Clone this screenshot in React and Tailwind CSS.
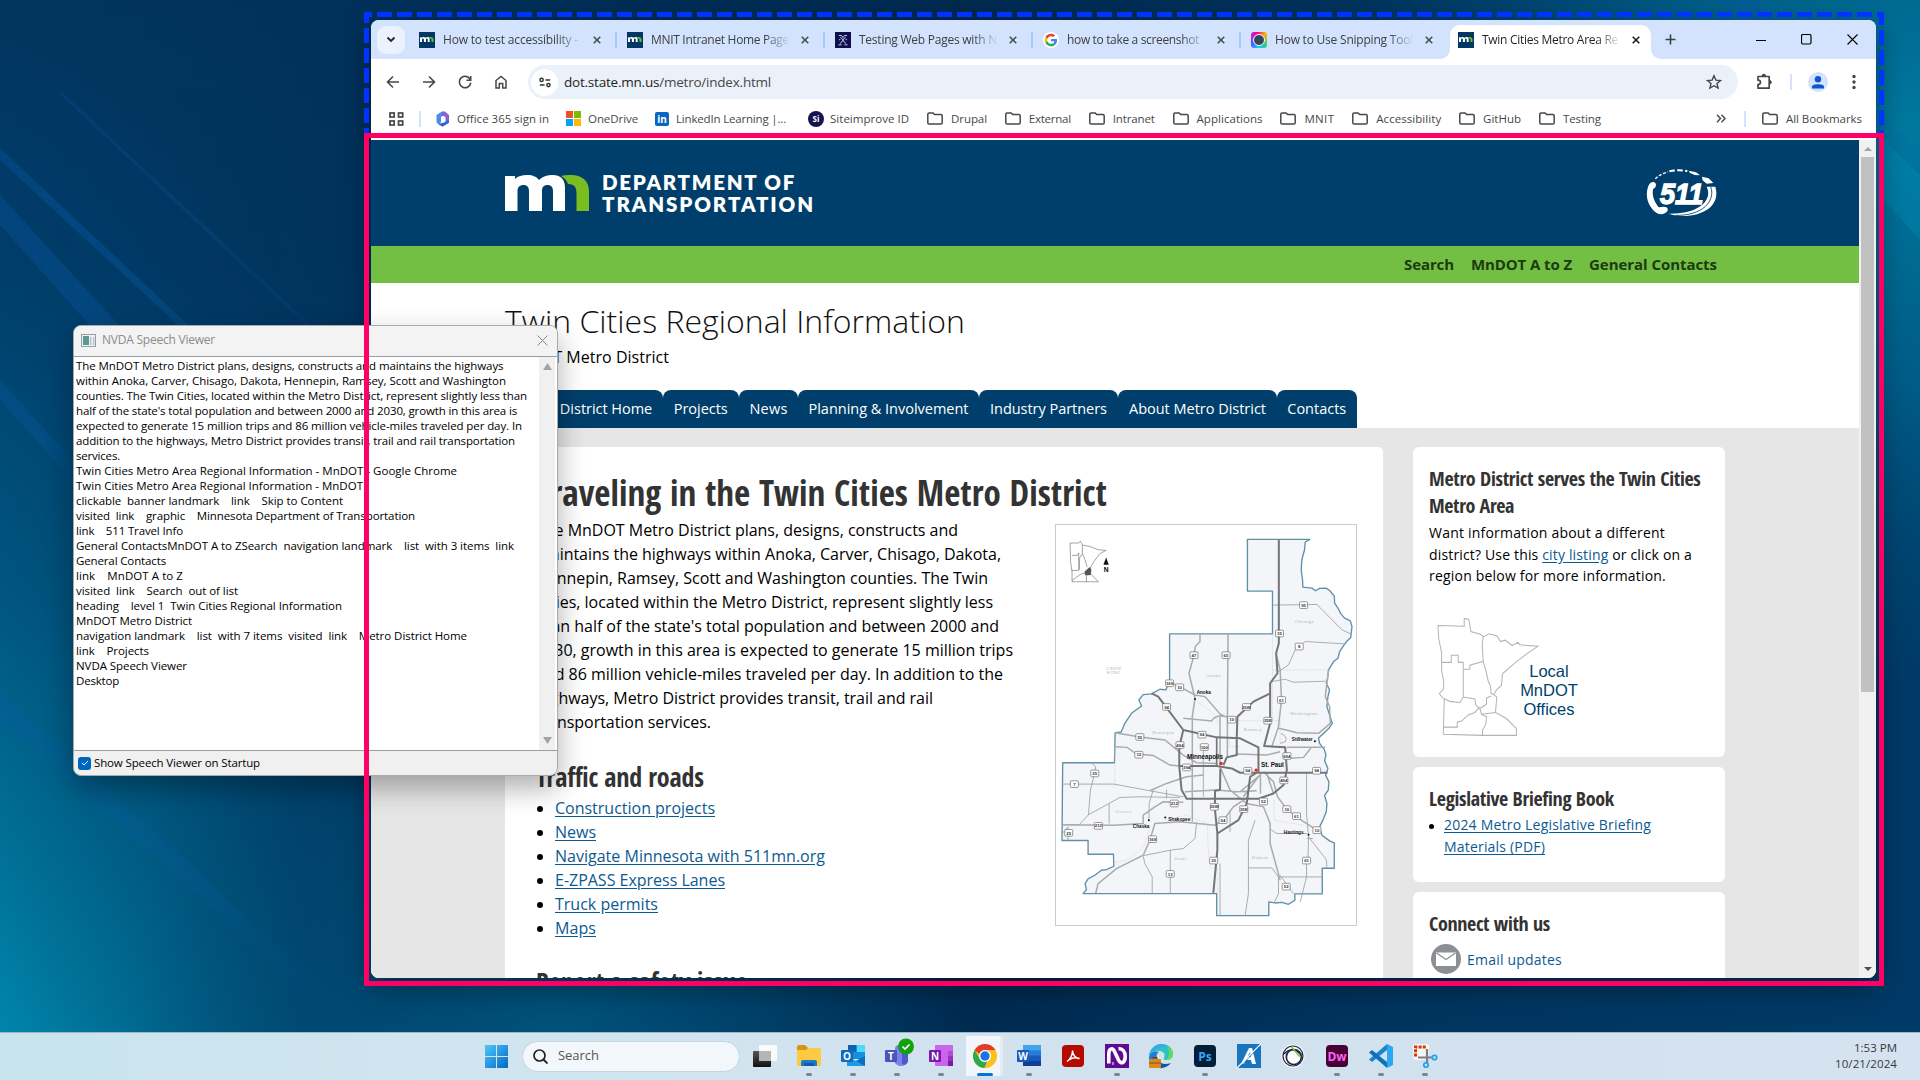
import React, { useLayoutEffect, useRef, useState } from 'react';

/* One line of text whose tracking is adjusted so that it spans w pixels. */
function Fit({ w, className = '', children }) {
  const ref = useRef(null);
  const [ls, setLs] = useState(0);
  useLayoutEffect(() => {
    const el = ref.current;
    const n = el.textContent.length;
    const natural = el.getBoundingClientRect().width;
    if (w && n) setLs((w - natural) / n);
  }, [w]);
  return (
    <span ref={ref} className={`inline-block whitespace-pre ${className}`} style={{ letterSpacing: `${ls}px` }}>
      {children}
    </span>
  );
}

function Wallpaper() {
  return (
    <svg className="absolute inset-0" width="1920" height="1080" viewBox="0 0 1920 1080">
      <defs>
        <linearGradient id="wl" x1="0" y1="0" x2="0" y2="1">
          <stop offset="0" stopColor="#01355f" />
          <stop offset=".25" stopColor="#003e6b" />
          <stop offset=".55" stopColor="#005680" />
          <stop offset=".8" stopColor="#007299" />
          <stop offset="1" stopColor="#008bb0" />
        </linearGradient>
        <linearGradient id="wd" x1="0" y1="0" x2="1" y2="0">
          <stop offset="0" stopColor="#01305a" stopOpacity="0" />
          <stop offset=".16" stopColor="#013059" stopOpacity=".75" />
          <stop offset=".5" stopColor="#002a50" />
          <stop offset=".75" stopColor="#003560" />
          <stop offset="1" stopColor="#003a66" />
        </linearGradient>
        <radialGradient id="wr" gradientUnits="userSpaceOnUse" cx="1900" cy="130" r="560">
          <stop offset="0" stopColor="#00799f" />
          <stop offset=".45" stopColor="#00628d" stopOpacity=".85" />
          <stop offset="1" stopColor="#004a78" stopOpacity="0" />
        </radialGradient>
        <linearGradient id="ws" x1="0" y1="0" x2="1" y2="1">
          <stop offset="0" stopColor="#0a56a8" stopOpacity=".45" />
          <stop offset=".5" stopColor="#0a5fb0" stopOpacity=".4" />
          <stop offset="1" stopColor="#0a56a8" stopOpacity="0" />
        </linearGradient>
        <radialGradient id="wb" gradientUnits="userSpaceOnUse" cx="560" cy="1040" r="420">
          <stop offset="0" stopColor="#005880" stopOpacity=".8" />
          <stop offset="1" stopColor="#004a78" stopOpacity="0" />
        </radialGradient>
      </defs>
      <rect width="1920" height="1080" fill="url(#wl)" />
      <rect width="1920" height="1080" fill="url(#wd)" />
      <rect width="1920" height="1080" fill="url(#wb)" />
      <rect width="1920" height="1080" fill="url(#wr)" />
      <g fill="url(#ws)">
        <path d="M0 148L300 430L300 438L0 160Z" opacity=".8" />
        <path d="M0 195L160 370L320 560L300 560L0 225Z" opacity=".7" />
        <path d="M60 90L370 380V386L60 94Z" opacity=".5" />
        <path d="M0 380L90 480V500L0 400Z" opacity=".6" />
        <path d="M0 690L370 1030H350L0 720Z" opacity=".4" />
        <path d="M1720 0H1760L1920 150V190Z" opacity=".6" />
      </g>
      <path d="M1880 135L1920 175V240L1880 195Z" fill="#0089b0" opacity=".4" />
    </svg>
  );
}

function MnMark({ className, n = '#78be21' }) {
  return (
    <svg className={className} viewBox="0 0 84 36">
      <path fill="#fff" d="M0 1H10V4C13 1 17 0 22 0C28 0 32 2 34 5C38 1 43 0 48 0C56 0 60 5 60 13V36H48V16C48 12 46 10 42.500 10S37 12 37 16V36H24V16C24 12 22 10 18.500 10S12.500 12 12.500 16V36H0Z" />
      <path fill={n} d="M56 1C59 0 62 0 66 0C77 0 84 6 84 16V36H71.500V18C71.500 12 69 9 63 9C62 6 60 3 56 1Z" />
    </svg>
  );
}

const MnIcon = () => (
  <span className="flex size-4 shrink-0 items-center justify-center bg-[#003865]">
    <MnMark className="w-[13.500px]" />
  </span>
);

const NIcon = () => (
  <svg className="size-4 shrink-0" viewBox="0 0 16 16">
    <rect width="16" height="16" fill="#10104f" />
    <path d="M4 3.500h2.500L8 5.500 9.500 3.500H12M5.500 5.500C8 6 8 10 11 11.500M10.500 5.500C8 6 8 10 5 11.500M3.500 12.800h3M9.500 12.800h3M4 8l1.500-1M12 8l-1.500-1" stroke="#c9cff0" strokeWidth="1" fill="none" />
  </svg>
);

const GIcon = () => (
  <svg className="size-4 shrink-0" viewBox="0 0 48 48">
    <circle cx="24" cy="24" r="24" fill="#fff" />
    <g transform="translate(5 5) scale(.79)">
      <path fill="#EA4335" d="M24 9.500c3.540 0 6.710 1.220 9.210 3.600l6.850-6.850C35.900 2.380 30.470 0 24 0 14.620 0 6.510 5.380 2.560 13.220l7.980 6.190C12.430 13.720 17.740 9.500 24 9.500z" />
      <path fill="#4285F4" d="M46.980 24.550c0-1.570-.15-3.090-.38-4.550H24v9.020h12.940c-.58 2.960-2.260 5.480-4.780 7.180l7.730 6c4.510-4.180 7.090-10.360 7.090-17.650z" />
      <path fill="#FBBC05" d="M10.530 28.590c-.48-1.450-.76-2.990-.76-4.590s.27-3.140.76-4.590l-7.980-6.190C.92 16.460 0 20.120 0 24c0 3.880.92 7.540 2.560 10.780l7.970-6.190z" />
      <path fill="#34A853" d="M24 48c6.480 0 11.930-2.130 15.890-5.810l-7.730-6c-2.150 1.450-4.920 2.300-8.160 2.300-6.260 0-11.570-4.220-13.470-9.910l-7.980 6.190C6.510 42.620 14.620 48 24 48z" />
    </g>
  </svg>
);

const SnipIcon = () => (
  <span className="flex size-4 shrink-0 items-center justify-center rounded-[3px] bg-[conic-gradient(from_45deg,#ffb000,#20d090_25%,#20c8f0_40%,#4060ff_55%,#c020f0_70%,#ff0080_85%,#ffb000)]">
    <span className="size-[12px] rounded-full border-[1.500px] border-white bg-[#33475a]" />
  </span>
);

const X = ({ c = '#3c4043' }) => (
  <svg width="8" height="8" viewBox="0 0 8 8" className="shrink-0">
    <path d="M.7.7l6.600 6.600M7.300.7L.7 7.300" stroke={c} strokeWidth="1.600" />
  </svg>
);

const tabs = [
  [MnIcon, 'How to test accessibility -', 135],
  [MnIcon, 'MNIT Intranet Home Page', 138],
  [NIcon, 'Testing Web Pages with N', 138],
  [GIcon, 'how to take a screenshot', 132],
  [SnipIcon, 'How to Use Snipping Tool', 138],
];

function TabText({ text, w, c = 'text-[#3c4043]' }) {
  return (
    <div className={`ml-2 w-[139px] font-['Open_Sans'] text-[12px] leading-4 [mask-image:linear-gradient(90deg,#000_82%,transparent)] ${c}`}>
      <Fit w={w}>{text}</Fit>
    </div>
  );
}

function TabStrip() {
  return (
    <div className="flex h-[39px] items-center bg-[#d3e3fd]">
      <div className="ml-[6px] flex size-[28px] items-center justify-center rounded-[9px] bg-[#ecf2fd]">
        <svg width="10" height="7" viewBox="0 0 10 7"><path d="M1.500 1.500L5 5l3.500-3.500" fill="none" stroke="#222" strokeWidth="1.800" /></svg>
      </div>
      <div className="ml-[6px] flex">
        {tabs.map(([Icon, t, w], i) => (
          <div key={t} className="flex w-[208px] items-center">
            <div className="ml-2"><Icon /></div>
            <TabText text={t} w={w} />
            <div className="ml-[11px]"><X c="#4a4d52" /></div>
            <div className={`ml-[14px] h-4 w-[2px] ${i < 4 ? 'bg-[#a8c7fa]' : ''}`} />
          </div>
        ))}
      </div>
      <div className="relative -ml-[1px] flex h-[34px] w-[201px] items-center self-end rounded-t-[10px] bg-white pb-[5px]">
        <svg className="absolute -left-[10px] bottom-0" width="10" height="10"><path d="M10 0A10 10 0 0 1 0 10H10Z" fill="#fff" /></svg>
        <svg className="absolute -right-[10px] bottom-0" width="10" height="10"><path d="M0 0A10 10 0 0 0 10 10H0Z" fill="#fff" /></svg>
        <div className="ml-2"><MnIcon /></div>
        <TabText text="Twin Cities Metro Area Re" w={136} c="text-[#1f1f1f]" />
        <div className="ml-[11px]"><X c="#1f1f1f" /></div>
      </div>
      <svg className="ml-[14px]" width="11" height="11" viewBox="0 0 11 11"><path d="M5.500.5v10M.5 5.500h10" stroke="#3c4043" strokeWidth="1.600" /></svg>
      <svg className="ml-[80px]" width="10" height="10"><path d="M0 5.500h10" stroke="#000" /></svg>
      <svg className="ml-[35px]" width="11" height="11"><rect x=".5" y=".5" width="9.500" height="9.500" rx="1.500" fill="none" stroke="#000" strokeWidth="1.200" /></svg>
      <svg className="ml-[35px]" width="11" height="11"><path d="M.5.5l10 10M10.500.5l-10 10" stroke="#000" strokeWidth="1.100" /></svg>
    </div>
  );
}

const P = ({ d, s = 16, sw = 1.6 }) => (
  <svg width={s} height={s} viewBox="0 0 16 16" fill="none" stroke="#474747" strokeWidth={sw} className="shrink-0"><path d={d} /></svg>
);

function Toolbar() {
  return (
    <div className="flex h-[46px] items-center bg-white">
      <div className="ml-[14px] flex gap-5">
        <P d="M14 8H2.500M8 2.500L2.500 8 8 13.500" />
        <P d="M2 8h11.500M8 2.500L13.500 8 8 13.500" />
        <P d="M13 5.200A5.700 5.700 0 1 0 13.700 8.600M13.700 2v4.200H9.500" />
        <P d="M3 14V6.500L8 2.500l5 4V14H9.700V9.500H6.300V14Z" sw={1.5} />
      </div>
      <div className="ml-[19px] flex h-[34px] w-[1210px] items-center rounded-full bg-[#ebf1f9]">
        <div className="ml-[3px] flex size-[27px] items-center justify-center rounded-full bg-white">
          <svg width="12" height="11" viewBox="0 0 14 12" fill="none" stroke="#333" strokeWidth="1.700"><circle cx="3" cy="3" r="1.900" /><path d="M7.500 3h5.500M1 9h5.500" /><circle cx="11" cy="9" r="1.900" /></svg>
        </div>
        <div className="ml-[6px] font-['Open_Sans'] text-[13.500px] leading-5 text-[#1f1f1f]">
          <Fit w={207}>dot.state.mn.us<span className="text-[#474747]">/metro/index.html</span></Fit>
        </div>
        <svg className="ml-auto mr-[16px]" width="16" height="16" viewBox="0 0 16 16"><path d="M8 1.800l1.900 4.300 4.600.4-3.500 3 1.100 4.600L8 11.700l-4.100 2.400L5 9.500l-3.500-3 4.600-.4Z" fill="none" stroke="#474747" strokeWidth="1.400" /></svg>
      </div>
      <svg className="ml-[18px]" width="18" height="18" viewBox="0 0 18 18"><path d="M2 3.500H13.200V15.200H2V11.500C5.300 11.500 5.300 7.200 2 7.200Z" fill="none" stroke="#474747" strokeWidth="1.700" strokeLinejoin="round" /><path d="M6 3a1.800 1.800 0 0 1 3.600 0zM13.500 7.400a1.800 1.800 0 0 1 0 3.600z" fill="#474747" stroke="#474747" /></svg>
      <div className="ml-[16px] h-4 w-[2px] bg-[#d3e3fd]" />
      <svg className="ml-[16px]" width="20" height="20"><circle cx="10" cy="10" r="10" fill="#d3e3fd" /><circle cx="10" cy="7.200" r="3.200" fill="#0b57d0" /><path d="M4 16.500V14.500C4 11.500 16 11.500 16 14.500V16.500Z" fill="#0b57d0" /></svg>
      <svg className="ml-[24px]" width="4" height="16" fill="#474747"><circle cx="2" cy="2.500" r="1.700" /><circle cx="2" cy="8" r="1.700" /><circle cx="2" cy="13.500" r="1.700" /></svg>
    </div>
  );
}

const Folder = () => (
  <svg width="16" height="13" viewBox="0 0 16 13" className="shrink-0"><path d="M.8 2.200c0-.8.5-1.300 1.300-1.300h4l1.600 1.700h6.200c.8 0 1.300.5 1.300 1.300v6.900c0 .8-.5 1.300-1.300 1.300H2.100c-.8 0-1.300-.5-1.300-1.300Z" fill="none" stroke="#474747" strokeWidth="1.500" /></svg>
);

const folders = [['Drupal', 36], ['External', 42], ['Intranet', 42], ['Applications', 66], ['MNIT', 30], ['Accessibility', 65], ['GitHub', 38], ['Testing', 38]];

function Bookmarks() {
  return (
    <div className="flex h-[29px] items-center bg-white pb-[2px] font-['Open_Sans'] text-[11.500px] text-[#474747]">
      <svg className="ml-[18px]" width="15" height="14" fill="none" stroke="#474747" strokeWidth="1.700"><rect x="1" y="1" width="4.200" height="4" /><rect x="9.500" y="1" width="4.200" height="4" /><rect x="1" y="9" width="4.200" height="4" /><rect x="9.500" y="9" width="4.200" height="4" /></svg>
      <div className="ml-[15px] h-4 w-[2px] bg-[#d3e3fd]" />
      <svg className="ml-[14px]" width="15" height="16" viewBox="0 0 15 16">
        <path d="M7 .5L1.500 4v7.500L4 13.500 6 11V6L10.500 2.500Z" fill="#4a8de8" />
        <path d="M7 .5h3l4 3.500v6l-3.500 1.500V6L7 4.500Z" fill="#8a5fd0" />
        <path d="M3 13l4.500 2.700 6.500-4V9l-5 2.500Z" fill="#2f62d9" />
      </svg>
      <Fit w={92} className="ml-[7px]">Office 365 sign in</Fit>
      <svg className="ml-[17px]" width="15" height="15"><path fill="#f25022" d="M0 0h7v7H0z" /><path fill="#7fba00" d="M8 0h7v7H8z" /><path fill="#00a4ef" d="M0 8h7v7H0z" /><path fill="#ffb900" d="M8 8h7v7H8z" /></svg>
      <Fit w={50} className="ml-[7px]">OneDrive</Fit>
      <span className="ml-[17px] flex size-[14px] items-center justify-center rounded-[2px] bg-[#0a66c2] font-['Open_Sans'] text-[10px] font-bold leading-none text-white">in</span>
      <Fit w={110} className="ml-[7px]">LinkedIn Learning |...</Fit>
      <span className="ml-[22px] flex size-4 items-center justify-center rounded-full bg-[#141450] text-[8px] font-bold leading-none text-white">Si</span>
      <Fit w={79} className="ml-[6px]">Siteimprove ID</Fit>
      <div className="ml-[18px] flex gap-[17.850px]">
        {folders.map(([t, w]) => (
          <div key={t} className="flex items-center gap-2"><Folder /><Fit w={w}>{t}</Fit></div>
        ))}
      </div>
      <svg className="ml-auto" width="10" height="9"><path d="M1 .8l3.500 3.700L1 8.200M5.500.8L9 4.500 5.500 8.200" fill="none" stroke="#474747" strokeWidth="1.400" /></svg>
      <div className="ml-[18px] h-4 w-[2px] bg-[#d3e3fd]" />
      <div className="ml-[16px] mr-[14px] flex items-center gap-2"><Folder /><Fit w={76}>All Bookmarks</Fit></div>
    </div>
  );
}

function Logo511() {
  return (
    <svg width="84" height="58" viewBox="0 0 252 174">
      <path d="M26 64C36 46 54 56 46 70L39 76C36 96 42 112 56 130L72 128C86 128 88 142 74 148C62 155 46 148 36 134C20 114 16 88 26 64Z" fill="#fff" />
      <path d="M46 44Q60 30 84 24" stroke="#fff" strokeWidth="4" strokeDasharray="9 5" fill="none" />
      <path d="M88 22Q112 16 142 21" stroke="#fff" strokeWidth="6" strokeDasharray="17 7" fill="none" />
      <path d="M146 20l22 5 12 9-16-1-14-6zM186 38l20 5 14 14-20 2-12-10z" fill="#fff" />
      <path d="M200 68C218 104 184 150 86 149C150 170 248 142 226 68Z" fill="#fff" />
      <path d="M212 68C228 112 186 156 106 154" stroke="#003f6b" strokeWidth="2.500" fill="none" />
      <text x="60" y="119" fontFamily="Liberation Sans" fontWeight="bold" fontStyle="italic" fontSize="86" textLength="130" lengthAdjust="spacingAndGlyphs" fill="#fff" stroke="#fff" strokeWidth="4">511</text>
    </svg>
  );
}

const shields = [
  [790, 286, '95'], [718, 371, '35'], [777, 410, '8'], [462, 436, '47'], [558, 436, '65'], [389, 520, '169'], [419, 532, '10'], [724, 570, '61'],
  [380, 591, '94'], [619, 591, '35W'], [575, 629, '10'], [683, 632, '35E'], [300, 681, '55'], [486, 674, '94'], [420, 705, '494'], [493, 711, '100'],
  [297, 734, '12'], [740, 738, '694'], [440, 772, '394'], [623, 782, '94'], [829, 782, '94'], [165, 790, '25'], [104, 822, '7'], [731, 811, '494'],
  [670, 874, '52'], [403, 880, '212'], [523, 890, '35W'], [611, 897, '35E'], [740, 897, '10'], [769, 918, '61'], [549, 930, '54'], [176, 947, '212'],
  [830, 960, '10'], [87, 968, '25'], [338, 987, '169'], [521, 1051, '35'], [799, 1051, '61'], [391, 1091, '13'], [738, 1129, '52'],
];

function MetroMap() {
  return (
    <svg width="302" height="402" viewBox="46 43 904 1204" preserveAspectRatio="none" className="block" fontFamily="Liberation Sans">
      <rect x="47.500" y="44.500" width="901" height="1201" fill="#fff" stroke="#ccc" strokeWidth="3" />
      <path d="M622 89H809L795 97 793 120 785 150 783 180 787 210 788 232 815 235 826 243 838 236 858 235 869 243 882 259 883 280 893 295 902 312 913 325 930 333 935 350 931 384 918 396 908 410 898 425 893 445 880 455 865 480 862 505 858 520 868 540 863 560 860 590 868 615 876 640 866 655 852 668 835 684 838 700 852 718 857 735 853 752 863 775 856 795 866 815 864 840 853 856 860 880 858 905 848 930 838 950 845 975 868 992 882 998V1074H846V1151H764V1170L745 1182 725 1176 705 1178 686 1175V1216H530V1150H130L140 1138 136 1120 145 1106 165 1095 185 1080 200 1078 222 1068 221 1032H145V991H67L69 758H224L226 668 244 666 255 640 275 610 305 588 297 570 310 554 335 552 360 538 378 540 389 510V372H697V244H622Z" fill="#f3f5f8" stroke="#5f8fa9" strokeWidth="4" strokeLinejoin="round" />
      <path d="M697 480H862M589 632H720V710M697 375V632M225 710V832M503 945V990L510 1072H532V1150M568 690V710H600M376 930L440 915 500 940M465 570L520 610 535 640M702 870V930L790 945M222 1060L270 1045 312 1010 330 950" fill="none" stroke="#ccd0d4" strokeWidth="2" strokeDasharray="4 3" />
      <g fill="none" stroke="#9c9ea0" strokeWidth="2.500">
        <path d="M697 286L830 284 905 360 931 372M712 487L745 465 765 420 795 395 913 402M693 515L735 508 760 517 855 514M155 758L168 770 162 800 152 840 146 914M68 822H223L330 842 430 860M68 944H118L146 914 208 880 240 862 300 860 420 862M208 880V940M68 970 85 950V991M310 1038L315 1060 337 1100V1148M312 1036 391 1020 430 1015 465 985 470 935M391 1020V1150M615 1216L625 1150V990L645 930M625 1073H695L715 1100H845M799 1051V1100L780 1175M799 790V910L805 980 858 1048 860 1074M690 957 710 970H800M805 980 803 1051M380 838V865M340 840 328 880 327 930M490 720V860M570 900V965M540 1060V1216M760 1150 745 1130 720 1095M715 1100V1150L703 1175M800 985H818M722 670Q745 680 735 695L720 700" />
      </g>
      <g fill="none" stroke="#a9abad" strokeWidth="4.500">
        <path d="M480 373V395L466 410 462 436 447 490 465 565 457 620V935M564 373L562 630V740M403 522L465 555 495 560 540 612 575 629M430 625L515 633Q525 612 560 620M225 710L262 712 290 732 340 736 390 765 440 770M226 668L300 681 375 690 430 735 470 758 530 760M710 440 720 480 724 570 715 650 695 710M715 655Q740 660 770 668L835 670M865 480 855 560 868 590 870 640 835 670M740 712H855M740 745 790 742 812 714M435 845L530 840 590 845 650 842M330 842 380 820 440 800 490 795M68 944 220 945 310 940V915L345 890 370 875 430 876M168 1148 175 1120 230 1075 310 1035 330 990 345 940 420 935 525 945 550 930 580 890 625 860M540 615V770L570 840 620 880 670 890 690 940V1000L720 1110M670 785 700 815 712 860 740 897 775 925 830 960M600 845 660 795M610 860 655 800M661 790V850M680 790 700 850M720 725 680 735 590 732" />
      </g>
      <g fill="none" stroke="#737577" strokeWidth="6" strokeLinejoin="round">
        <path d="M716 90V400L708 430 712 490 690 520V550L640 575 592 620 590 685V735L560 742 550 765M690 550V640L672 708 735 712 740 780 730 825 700 850 657 865M657 866H440L425 840 418 770V710L430 660L355 560 335 550M430 660L530 682 600 685 655 712V785L630 800 620 880 595 930 532 970V1020L520 1148M541 775 540 840 525 842V900L532 970M420 768 530 768 575 775 600 788H862" />
        <path d="M530 682V768" strokeWidth="5" />
      </g>
      <g fontSize="13" fontWeight="bold" textAnchor="middle" fill="#333">
        {shields.map(([x, y, t]) => (
          <g key={`${x}-${y}`}>
            <rect x={x - 12} y={y - 10} width="24" height="20" rx="3" fill="#fff" stroke="#666" strokeWidth="2" />
            <text x={x} y={y + 5}>{t}</text>
          </g>
        ))}
      </g>
      <g fill="#aaa" fontFamily="Liberation Serif" fontSize="13" letterSpacing="2">
        <text x="765" y="339">Chisago</text><text x="498" y="502">Anoka</text><text x="750" y="614">Washington</text><text x="337" y="672">Hennepin</text><text x="612" y="664">Ramsey</text><text x="228" y="910">Carver</text><text x="404" y="1048">Scott</text><text x="636" y="1047">Dakota</text>
        <text x="200" y="479">CROW</text><text x="200" y="493">WING</text>
      </g>
      <g fontWeight="bold" fontSize="14" fill="#111">
        <text x="470" y="551">Anoka</text><text x="755" y="694">Stillwater</text><text x="385" y="934">Shakopee</text><text x="279" y="953">Chaska</text><text x="731" y="970">Hastings</text>
        <text x="441" y="748" fontSize="19" textLength="108">Minneapolis</text><text x="663" y="772" fontSize="19" textLength="68">St. Paul</text>
      </g>
      <g fill="#111"><circle cx="465" cy="567" r="3" /><circle cx="824" cy="694" r="3" /><circle cx="376" cy="922" r="3" /><circle cx="327" cy="930" r="3" /><circle cx="805" cy="974" r="3" /></g>
      <circle cx="543" cy="760" r="5" fill="#e22" /><circle cx="648" cy="780" r="5" fill="#e22" />
      <path d="M91 100H117L122 94 128 106 150 110 175 120 199 122 180 132 165 152 155 168 150 180 152 192 176 216H97V185L93 160ZM97 137H113L117 130V182H95M119 180V145L128 132 136 150 142 172M97 212 125 192 138 190M140 198V217M128 106V132" fill="none" stroke="#777" strokeWidth="2" />
      <path d="M134 186L150 172 155 180 153 196 137 197Z" fill="#555" />
      <path d="M199 143L207 165H191Z" fill="#111" /><text x="192" y="187" fontSize="20" fontWeight="bold">N</text>
    </svg>
  );
}

const StateMap = () => (
  <svg width="113" height="127" viewBox="150 510 340 355" preserveAspectRatio="none" fill="none" stroke="#b3b3b3" strokeWidth="3">
    <path d="M174 545L253 547V525L267 528 273 562 303 570 310 577 328 568 352 574 362 590 376 586 397 601 415 592 420 599 475 603 440 625 405 650 368 680 365 712 350 725 342 738 351 745 347 788 380 805 410 833V852L308 852 190 849 193 752 178 735 191 722V700L185 670V622L176 580ZM185 648H214V628H235V648H250V745M250 667H270V656L310 645 307 600 310 577M310 645L318 670 325 700 332 715 334 735 342 738M193 750 210 757 240 760 250 745 285 750 288 768 300 777 320 765V748L334 742M297 775 285 788 265 795 245 812 232 815V829H191M300 777 305 793 320 800 318 820 308 838V852M305 793 347 788" />
  </svg>
);

const siteTabs = [['Metro District Home', 157.5, 137], ['Projects', 76.5, 54], ['News', 59, 38], ['Planning & Involvement', 181, 160], ['Industry Partners', 139, 117], ['About Metro District', 159, 137], ['Contacts', 79.5, 59]];

const intro = [
  ['The MnDOT Metro District plans, designs, constructs and', 422], ['maintains the highways within Anoka, Carver, Chisago, Dakota,', 465], ['Hennepin, Ramsey, Scott and Washington counties. The Twin', 452],
  ['Cities, located within the Metro District, represent slightly less', 457], ["than half of the state's total population and between 2000 and", 463], ['2030, growth in this area is expected to generate 15 million trips', 477],
  ['and 86 million vehicle-miles traveled per day. In addition to the', 467], ['highways, Metro District provides transit, trail and rail', 397], ['transportation services.', 175],
];
const links = [['Construction projects', 160], ['News', 41], ['Navigate Minnesota with 511mn.org', 270], ['E-ZPASS Express Lanes', 170], ['Truck permits', 103], ['Maps', 41]];

function SideHeading({ w, children }) {
  return <h3 className="font-['Open_Sans_Condensed'] text-[20px] font-bold leading-[27px] text-[#333]"><Fit w={w}>{children}</Fit></h3>;
}

function Site() {
  return (
    <div className="mt-[1px] h-[838px] w-[1488px] overflow-hidden bg-white font-['Open_Sans'] text-black">
      <header className="flex h-[106px] items-start bg-[#003f6b] pl-[134px]">
        <MnMark className="mt-[35px] h-[36px] w-[84px]" />
        <div className="ml-[13px] mt-[31px] flex flex-col items-start font-['Lato'] text-[20.500px] font-extrabold leading-[22px] text-white">
          <Fit w={194}>DEPARTMENT OF</Fit>
          <Fit w={213}>TRANSPORTATION</Fit>
        </div>
        <div className="ml-auto mr-[135px] mt-[24px]"><Logo511 /></div>
      </header>
      <nav className="flex h-[37px] items-center justify-end gap-[17px] bg-[#72bf44] pr-[142px] text-[15px] font-bold text-[#1d3a10]">
        <Fit w={50}>Search</Fit><Fit w={101}>MnDOT A to Z</Fit><Fit w={128}>General Contacts</Fit>
      </nav>
      <div className="h-[145px] pl-[134px] pt-[17px]">
        <h1 className="text-[32px] font-light leading-[42px] text-[#111]"><Fit w={460}>Twin Cities Regional Information</Fit></h1>
        <p className="mt-[3px] text-[16px] leading-6"><Fit w={164}>MnDOT Metro District</Fit></p>
        <div className="mt-[21px] flex">
          {siteTabs.map(([t, w, tw]) => (
            <div key={t} className="flex h-[38px] items-center justify-center rounded-t-[8px] bg-[#003f6b] text-[14.500px] font-medium text-white" style={{ width: w }}><Fit w={tw}>{t}</Fit></div>
          ))}
        </div>
      </div>
      <div className="flex h-[560px] bg-[#e6e6e6] pl-[134px] pt-[19px]">
        <main className="flex h-[560px] w-[878px] justify-between rounded-t-[5px] bg-white pl-[31px] pr-[26px]">
          <div>
            <h2 className="mt-[22px] w-[480px] whitespace-nowrap font-['Open_Sans_Condensed'] text-[35px] font-bold leading-[48px] text-[#333]"><Fit w={571}>Traveling in the Twin Cities Metro District</Fit></h2>
            <div className="mt-[1px] flex flex-col items-start text-[16px] leading-6">
              {intro.map(([t, w]) => <Fit key={t} w={w}>{t}</Fit>)}
            </div>
            <h3 className="mt-[25px] font-['Open_Sans_Condensed'] text-[26px] font-bold leading-[36px] text-[#333]"><Fit w={168}>Traffic and roads</Fit></h3>
            <ul className="mt-[1px] text-[16px] leading-6 text-[#0b5a92]">
              {links.map(([t, w]) => (
                <li key={t} className="flex items-center"><span className="ml-[1px] mr-[12px] mt-[2px] size-[6px] rounded-full bg-black" /><Fit w={w} className="underline underline-offset-2">{t}</Fit></li>
              ))}
            </ul>
            <h3 className="mt-[24px] font-['Open_Sans_Condensed'] text-[26px] font-bold leading-[36px] text-[#333]">Report a safety issue</h3>
          </div>
          <div className="mt-[77px]"><MetroMap /></div>
        </main>
        <aside className="ml-[30px] flex w-[312px] flex-col gap-[10px]">
          <section className="h-[310px] shrink-0 rounded-[6px] bg-white pl-4 pt-[18px]">
            <SideHeading w={271.5}>Metro District serves the Twin Cities</SideHeading>
            <SideHeading w={85}>Metro Area</SideHeading>
            <div className="mt-[3px] flex flex-col items-start text-[14px] leading-[21.600px]">
              <Fit w={236}>Want information about a different</Fit>
              <Fit w={263}>district? Use this <span className="text-[#0b5a92] underline underline-offset-2">city listing</span> or click on a</Fit>
              <Fit w={237}>region below for more information.</Fit>
            </div>
            <div className="ml-[1px] mt-[26px] flex">
              <StateMap />
              <div className="-ml-[24px] mt-[49px] w-[60px] text-center font-['Liberation_Sans'] text-[16.500px] leading-[19px] text-[#003f6b]">Local<br />MnDOT<br />Offices</div>
            </div>
          </section>
          <section className="h-[115px] shrink-0 rounded-[6px] bg-white pl-4 pt-[18px]">
            <SideHeading w={185}>Legislative Briefing Book</SideHeading>
            <div className="mt-[2px] flex text-[14px] leading-[22px] text-[#0b5a92]">
              <span className="mr-[10px] mt-[10px] size-[5px] rounded-full bg-black" />
              <div className="flex flex-col items-start">
                <Fit w={207} className="underline underline-offset-2">2024 Metro Legislative Briefing</Fit>
                <Fit w={101} className="underline underline-offset-2">Materials (PDF)</Fit>
              </div>
            </div>
          </section>
          <section className="h-[115px] shrink-0 rounded-[6px] bg-white pl-4 pt-[18px]">
            <SideHeading w={121}>Connect with us</SideHeading>
            <div className="mt-[7px] flex items-center text-[14px] text-[#0b5a92]">
              <svg className="ml-[2px] mr-[6px]" width="30" height="30"><circle cx="15" cy="15" r="15" fill="#8c8f94" /><path d="M5 8.500H25V22H5Z" fill="#fff" /><path d="M5.500 9L15 15.500 24.500 9" fill="none" stroke="#8c8f94" strokeWidth="1.400" /></svg>
              <Fit w={95}>Email updates</Fit>
            </div>
          </section>
        </aside>
      </div>
    </div>
  );
}

function Chrome() {
  return (
    <div className="absolute left-[371px] top-[20px] h-[958px] w-[1505px] overflow-hidden rounded-[8px] bg-white shadow-[0_8px_30px_rgba(0,0,0,0.45)]">
      <TabStrip />
      <Toolbar />
      <Bookmarks />
      <div className="h-[5px]" />
      <div className="flex">
        <Site />
        <div className="mt-[1px] flex h-[838px] w-[17px] flex-col items-center bg-[#f1f1f1]">
          <svg className="mt-[7px]" width="8" height="4"><path d="M0 4L4 0 8 4Z" fill="#a3a3a3" /></svg>
          <div className="mt-[6px] h-[535px] w-[13px] bg-[#c1c1c1]" />
          <svg className="mb-[7px] mt-auto" width="8" height="4"><path d="M0 0L4 4 8 0Z" fill="#505050" /></svg>
        </div>
      </div>
    </div>
  );
}

const speech = [
  ['The MnDOT Metro District plans, designs, constructs and maintains the highways', 427.5], ['within Anoka, Carver, Chisago, Dakota, Hennepin, Ramsey, Scott and Washington', 430],
  ['counties. The Twin Cities, located within the Metro District, represent slightly less than', 451], ["half of the state's total population and between 2000 and 2030, growth in this area is", 441],
  ['expected to generate 15 million trips and 86 million vehicle-miles traveled per day. In', 446], ['addition to the highways, Metro District provides transit, trail and rail transportation', 439],
  ['services.', 44], ['Twin Cities Metro Area Regional Information - MnDOT - Google Chrome', 381], ['Twin Cities Metro Area Regional Information - MnDOT', 287],
  ['clickable  banner landmark    link    Skip to Content', 267], ['visited  link    graphic    Minnesota Department of Transportation', 339], ['link    511 Travel Info', 107],
  ['General ContactsMnDOT A to ZSearch  navigation landmark    list  with 3 items  link', 438], ['General Contacts', 90], ['link    MnDOT A to Z', 107], ['visited  link    Search  out of list', 162],
  ['heading    level 1  Twin Cities Regional Information', 266], ['MnDOT Metro District', 116], ['navigation landmark    list  with 7 items  visited  link    Metro District Home', 391], ['link    Projects', 73], ['NVDA Speech Viewer', 111], ['Desktop', 43],
];

function SpeechViewer() {
  return (
    <div className="absolute left-[73px] top-[325px] flex h-[451px] w-[485px] flex-col overflow-hidden rounded-[8px] border border-[#a9a9a9] bg-[#f0f0f0] font-['Open_Sans'] text-black">
      <div className="flex h-[30px] shrink-0 items-center bg-[#f3f3f3] pb-[2px] pl-[7px]">
        <svg width="15" height="13"><rect x=".5" y=".5" width="14" height="12" fill="#eef2f4" stroke="#98a0a4" /><rect x="2" y="2" width="6" height="9" fill="#5a9a90" /><rect x="9" y="3" width="1.500" height="8" fill="#b9c3c8" /><rect x="12" y="3" width="1.500" height="8" fill="#b9c3c8" /></svg>
        <Fit w={113} className="ml-[6px] text-[12px] text-[#8c8c8c]">NVDA Speech Viewer</Fit>
        <svg className="ml-auto mr-[9px]" width="11" height="11"><path d="M.5.5l10 10M10.500.5l-10 10" stroke="#888" /></svg>
      </div>
      <div className="flex h-[395px] shrink-0 border-y border-[#9a9ea2] bg-white">
        <div className="flex flex-col items-start pl-[2px] pt-[1px] text-[11.500px] leading-[15px]">
          {speech.map(([t, w]) => <Fit key={t} w={w}>{t}</Fit>)}
        </div>
        <div className="ml-auto mr-[2px] flex w-[16px] flex-col items-center justify-between bg-[#f0f0f0] py-[6px]">
          <svg width="9" height="7"><path d="M0 7L4.500 0 9 7Z" fill="#a3a3a3" /></svg>
          <svg width="9" height="7"><path d="M0 0L4.500 7 9 0Z" fill="#a3a3a3" /></svg>
        </div>
      </div>
      <div className="flex flex-1 items-center pl-[4px]">
        <span className="flex size-[13px] items-center justify-center rounded-[3px] bg-[#0067c0]"><svg width="8" height="6"><path d="M1 3l2 2 4-4" fill="none" stroke="#fff" /></svg></span>
        <Fit w={166} className="ml-[3px] text-[11.500px]">Show Speech Viewer on Startup</Fit>
      </div>
    </div>
  );
}

const Ico = ({ children }) => <svg width="26" height="26" viewBox="0 0 26 26" className="overflow-visible">{children}</svg>;
const Letter = ({ x, y, s = 10, f = '#fff', children }) => <text x={x} y={y} fontFamily="Open Sans" fontWeight="bold" fontSize={s} textAnchor="middle" fill={f}>{children}</text>;

const apps = [
  [<Ico><defs><linearGradient id="tv" x1="0" y1="0" x2="0" y2="1"><stop stopColor="#555" /><stop offset="1" stopColor="#111" /></linearGradient></defs><rect x="1" y="8" width="18" height="16" rx="1" fill="url(#tv)" /><rect x="7" y="2" width="18" height="16" rx="1" fill="#fafafa" /><rect x="7" y="8" width="12" height="10" fill="#b5b5b5" /></Ico>, ''],
  [<Ico><path d="M1 4a2 2 0 0 1 2-2h6l3 3v6H1z" fill="#d9930d" /><path d="M1 7h9l2-2h11a2 2 0 0 1 2 2v16H1z" fill="#fdca44" /><path d="M5 23v-4a2 2 0 0 1 2-2h12a2 2 0 0 1 2 2v4z" fill="#1a7bc9" /><path d="M8 20h10v3H8z" fill="#0a5ea8" /></Ico>, 'g'],
  [<Ico><rect x="8" y="2" width="17" height="14" fill="#1490df" /><path d="M8 2h8v7H8z" fill="#0d63ab" /><path d="M17 2h8v7h-8z" fill="#50d9ff" /><path d="M7 13l9 5 9-5v10H7z" fill="#1a9be6" /><path d="M16 18l9-5v10z" fill="#0f6cbd" /><rect x="1" y="7" width="12" height="12" rx="1" fill="#0f6cbd" /><Letter x="7" y="17">O</Letter></Ico>, 'g'],
  [<Ico><circle cx="15" cy="6" r="4" fill="#7b83eb" /><path d="M9 9h15v8a6 6 0 0 1-6 6 7 7 0 0 1-8-6z" fill="#7b83eb" /><path d="M18 10h6v8a4 4 0 0 1-6 3z" fill="#5059c9" /><rect x="1" y="7" width="12" height="12" rx="1" fill="#4b53bc" /><Letter x="7" y="16.500">T</Letter><circle cx="22" cy="3.500" r="8" fill="#13a10e" /><path d="M18.500 3.500l2.500 2.500 4.500-4.500" fill="none" stroke="#fff" strokeWidth="1.600" /></Ico>, 'g'],
  [<Ico><rect x="7" y="2" width="18" height="21" rx="1" fill="#ca64ea" /><path d="M20 8h5v5h-5z" fill="#ae4bd5" /><path d="M20 13h5v5h-5z" fill="#9332bf" /><path d="M20 18h5v5h-5z" fill="#7719aa" /><rect x="1" y="7" width="12" height="12" rx="1" fill="#7719aa" /><Letter x="7" y="16.500">N</Letter></Ico>, 'g'],
  [<Ico><circle cx="13" cy="13" r="12" fill="#fbc116" /><path d="M13 1A12 12 0 0 1 23.400 7H13a6 6 0 0 0-5.600 4L2.600 7A12 12 0 0 1 13 1z" fill="#e33b2e" /><path d="M2.600 7l5.300 9.200A6 6 0 0 0 15 18.700L12.300 25A12 12 0 0 1 2.600 7z" fill="#2da94f" /><circle cx="13" cy="13" r="6" fill="#fff" /><circle cx="13" cy="13" r="4.700" fill="#1a73e8" /></Ico>, 'b'],
  [<Ico><rect x="7" y="2" width="18" height="21" rx="1" fill="#2b7cd3" /><path d="M7 2h18v5.300H7z" fill="#41a5ee" /><path d="M7 12.500h18v5.300H7z" fill="#185abd" /><path d="M7 17.800h18V23H7z" fill="#103f91" /><rect x="1" y="7" width="12" height="12" rx="1" fill="#185abd" /><Letter x="7" y="16.500">W</Letter></Ico>, 'g'],
  [<Ico><rect x="2" y="2" width="22" height="22" rx="4" fill="#b30b00" /><path d="M7 18.500c3-2 6-7 5.500-11M12.500 7.500c0 4 3 8 7 8-4-1.500-9-.5-12.500 3" fill="none" stroke="#fff" strokeWidth="1.500" /></Ico>, ''],
  [<Ico><rect x="1" y="1" width="24" height="24" fill="#5f0a94" /><path d="M4.800 20.500V11C4.800 4.500 9 4.500 11 9.500L14.500 17C17 22 21.200 20 21.200 13.500C21.200 8.500 18.500 5.500 14.500 5.500" fill="none" stroke="#fff" strokeWidth="3.600" /><path d="M9.500 20.500H8.500" stroke="#fff" strokeWidth="3" /></Ico>, 'g'],
  [<Ico><path d="M1 15C1 6 7 1 13 1c7 0 12 4 12 10 0 4-3 6-7 6-2 0-3-1-2-2 2-4-1-7-5-7-5 0-9 3-10 7z" fill="#2fc3c0" /><path d="M1 12C3 5 8 1 13 1c3 0 6 1 8 3-8-1-14 2-20 8z" fill="#37a9e8" /><path d="M19 3c4 2 6 5 6 8 0 4-3 6-7 6 4-4 4-9 1-14z" fill="#67d95e" /><path d="M9 10c-2 8 4 13 14 10-4 5-12 7-17 3z" fill="#0c59a4" /><path d="M1 14C3 8 8 8 11 9c-3 2-3 5-2 8H1z" fill="#1c7fd0" /><rect x="1" y="16" width="12" height="9" rx="1" fill="#d98a1c" /><path d="M1 20h12" stroke="#8a4d08" /><path d="M5 16v-1.500h4V16" stroke="#7a3e05" fill="none" /></Ico>, ''],
  [<Ico><rect x="2" y="2" width="22" height="22" rx="4" fill="#001e36" /><Letter x="13" y="17.500" s={12} f="#31a8ff">Ps</Letter></Ico>, 'g'],
  [<Ico><rect x="1" y="1" width="24" height="24" fill="#1b75bc" /><path d="M5 21L13 5h3l4 16h-4l-1-4h-5l-2 4zM11.500 14H15l-1-5z" fill="#fff" fillRule="evenodd" /><path d="M1 25L25 1" stroke="#fff" strokeWidth="1.200" /><path d="M3 25L24 3" stroke="#1b75bc" strokeWidth=".8" /></Ico>, ''],
  [<Ico><circle cx="13" cy="13" r="11.500" fill="#fff" /><circle cx="13" cy="13" r="10" fill="none" stroke="#1c2747" strokeWidth="1.200" /><circle cx="13.800" cy="14" r="7.500" fill="none" stroke="#1c2747" strokeWidth="1.700" /><path d="M4 11C9 5 16 6 20 11" fill="none" stroke="#1c2747" strokeWidth="1.400" /><path d="M11 4c5 3 5 8 10 10" fill="none" stroke="#7ac943" strokeWidth="1.500" /></Ico>, ''],
  [<Ico><rect x="2" y="2" width="22" height="22" rx="4" fill="#470137" /><Letter x="13" y="17.500" s={12} f="#ff61f6">Dw</Letter></Ico>, 'g'],
  [<Ico><path d="M19 1l6 3v18l-6 3z" fill="#2aa9f3" /><path d="M19 1v6L4 19l-3-2.500z" fill="#1b86d0" /><path d="M19 25v-6L4 7 1 9.500z" fill="#0d72b8" /></Ico>, 'g'],
  [<Ico><rect x="1" y="1" width="16" height="16" rx="2" fill="#f5f5f5" /><path d="M3.500 13.500V4h11" fill="none" stroke="#d83b01" strokeWidth="3" strokeDasharray="3 1.200" /><path d="M15 6v14M6 14.500h14" stroke="#7b8086" strokeWidth="2.200" /><circle cx="14" cy="22" r="2.200" fill="none" stroke="#2aa3e8" strokeWidth="1.800" /><circle cx="22.500" cy="14.500" r="2.200" fill="none" stroke="#2aa3e8" strokeWidth="1.800" /></Ico>, 'g'],
];

function Taskbar() {
  return (
    <div className="absolute inset-x-0 bottom-0 flex h-[48px] items-center border-t border-[#9db7c8] bg-[linear-gradient(90deg,#c9e4ed_0%,#d0e5ef_25%,#d2e1ee_60%,#d5e3f0_100%)] pb-[1px] font-['Open_Sans']">
      <svg className="ml-[485px] shrink-0" width="23" height="23"><defs><linearGradient id="win" x1="0" y1="0" x2="1" y2="1"><stop stopColor="#4cc8fa" /><stop offset="1" stopColor="#0568c4" /></linearGradient></defs><path d="M0 0h11v11H0zM12 0h11v11H12zM0 12h11v11H0zM12 12h11v11H12z" fill="url(#win)" /></svg>
      <div className="ml-[14px] flex h-[31px] w-[218px] shrink-0 items-center rounded-full border border-[#c5d5e0] bg-[#f2f7fb] pl-[10px]">
        <svg width="15" height="15"><circle cx="6.500" cy="6.500" r="5.500" fill="none" stroke="#222" strokeWidth="1.700" /><path d="M10.500 10.500l4 4" stroke="#222" strokeWidth="1.900" /></svg>
        <Fit w={41} className="ml-[10px] text-[13px] text-[#555]">Search</Fit>
      </div>
      <div className="ml-[3px] flex">
        {apps.map(([icon, run], i) => (
          <div key={i} className={`relative flex h-[40px] w-[44px] items-center justify-center ${run === 'b' ? 'rounded-[4px] bg-[linear-gradient(90deg,transparent_3px,#f2f6fa_3px_37px,#e3ecf3_37px_40px,transparent_40px)]' : ''}`}>
            {icon}
            {run === 'g' && <span className="absolute bottom-0 h-[3px] w-[6px] rounded-full bg-[#7c858c]" />}
            {run === 'b' && <span className="absolute bottom-0 h-[3px] w-[16px] rounded-full bg-[#0a74d1]" />}
          </div>
        ))}
      </div>
      <div className="ml-auto mr-[23px] flex flex-col items-end text-[11.500px] leading-4 text-[#33383c]">
        <Fit w={43}>1:53 PM</Fit><Fit w={62}>10/21/2024</Fit>
      </div>
    </div>
  );
}

export default function App() {
  return (
    <div className="relative h-[1080px] w-[1920px] overflow-hidden bg-[#003560]">
      <Wallpaper />
      <Chrome />
      <div className="absolute left-[73px] top-[325px] h-[451px] w-[485px] rounded-[8px] shadow-[0_12px_28px_rgba(0,0,0,0.32)]" />
      <SpeechViewer />
      <div className="absolute left-[364px] top-[12px] h-[5px] w-[8px] bg-[#0033ff]" />
      <div className="absolute left-[377px] top-[12px] h-[5px] w-[1495px] bg-[repeating-linear-gradient(90deg,#0033ff_0_15px,transparent_15px_20px)]" />
      <div className="absolute left-[1877px] top-[12px] h-[5px] w-[7px] bg-[#0033ff]" />
      <div className="absolute left-[364px] top-[12px] h-[11px] w-[5px] bg-[#0033ff]" />
      <div className="absolute left-[1879px] top-[12px] h-[13px] w-[5px] bg-[#0033ff]" />
      <div className="absolute left-[364px] top-[28px] h-[105px] w-[5px] bg-[repeating-linear-gradient(180deg,#0033ff_0_15px,transparent_15px_20px)]" />
      <div className="absolute left-[1879px] top-[30px] h-[103px] w-[5px] bg-[repeating-linear-gradient(180deg,#0033ff_0_15px,transparent_15px_20px)]" />
      <div className="absolute left-[364px] top-[133px] h-[853px] w-[1520px] border-[5px] border-[#ff0066]" />
      <Taskbar />
    </div>
  );
}
